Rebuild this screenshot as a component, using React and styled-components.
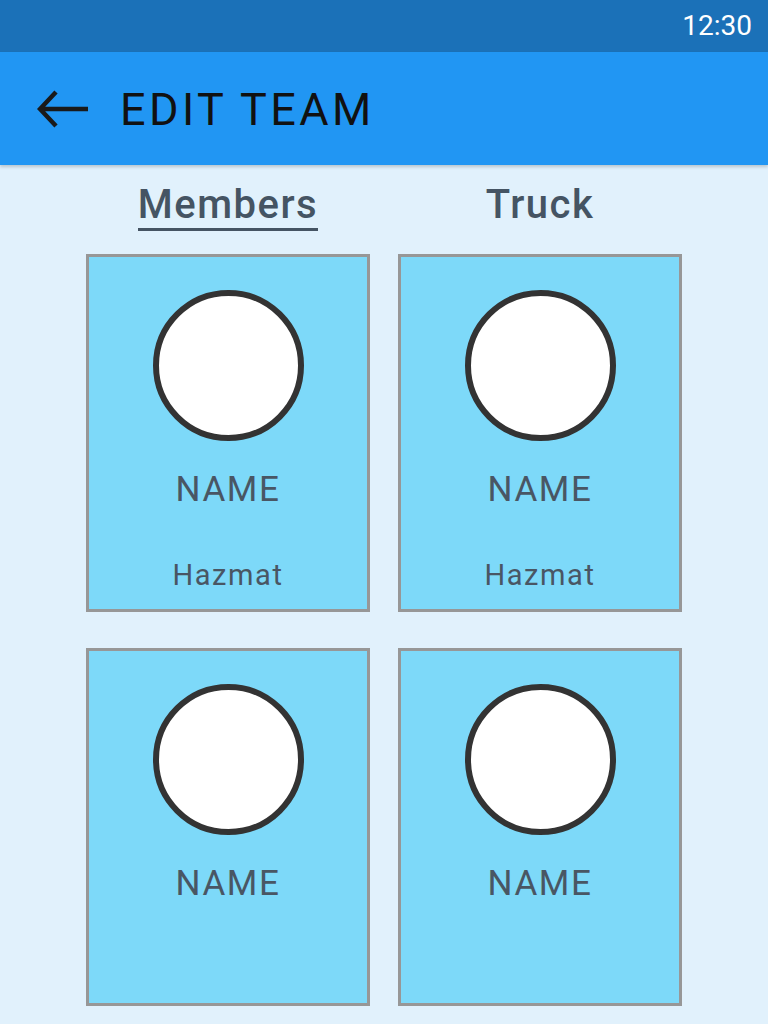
import React from 'react';
import styled, { createGlobalStyle } from 'styled-components';

const GlobalStyle = createGlobalStyle`
  html, body {
    margin: 0;
    padding: 0;
    background: #e1f1fc;
  }
  * {
    box-sizing: border-box;
  }
`;

const Page = styled.div`
  width: 768px;
  height: 1024px;
  overflow: hidden;
  background: #e1f1fc;
  font-family: Roboto, 'Liberation Sans', sans-serif;
`;

const StatusBar = styled.div`
  display: flex;
  justify-content: flex-end;
  align-items: center;
  height: 52px;
  padding-right: 16px;
  background: #1b71b8;
  color: #fff;
  font-size: 28px;
  line-height: 1;
`;

const AppBar = styled.header`
  display: flex;
  align-items: center;
  height: 113px;
  padding-left: 37px;
  gap: 31px;
  background: #2196f3;
  box-shadow: 0 2px 3px rgba(0, 0, 0, 0.18);
  position: relative;
`;

const Title = styled.h1`
  margin: 0;
  padding-top: 2px;
  font-size: 45px;
  font-weight: 400;
  letter-spacing: 3.4px;
  color: #111;
`;

const BackArrow = () => (
  <svg width='52' height='40' viewBox='0 0 52 40'>
    <path
      d='M51 20H4M19 3L3 20l16 17'
      fill='none'
      stroke='#1a1a1a'
      strokeWidth='4.5'
    />
  </svg>
);

const Tabs = styled.nav`
  display: grid;
  grid-template-columns: 284px 284px;
  column-gap: 28px;
  justify-content: center;
  margin-top: 16px;
`;

const TabCell = styled.div`
  display: flex;
  justify-content: center;
`;

const Tab = styled.span`
  display: inline-block;
  font-size: 40px;
  line-height: 47px;
  font-weight: 500;
  letter-spacing: 1.5px;
  color: #455463;
  border-bottom: 3px solid ${({ active }) => (active ? '#455463' : 'transparent')};
`;

const Grid = styled.div`
  display: grid;
  grid-template-columns: 284px 284px;
  column-gap: 28px;
  row-gap: 36px;
  justify-content: center;
  margin-top: 23px;
`;

const Card = styled.div`
  display: flex;
  flex-direction: column;
  align-items: center;
  height: 358px;
  padding-top: 33px;
  background: #7dd9f9;
  border: 3px solid #979797;
`;

const Avatar = styled.div`
  width: 151px;
  height: 151px;
  border-radius: 50%;
  background: #fff;
  border: 6px solid #333;
`;

const Name = styled.div`
  margin-top: 28px;
  font-size: 35px;
  line-height: 41px;
  letter-spacing: 1.6px;
  color: #495664;
`;

const Role = styled.div`
  margin-top: 48px;
  font-size: 29px;
  line-height: 34px;
  letter-spacing: 1.6px;
  color: #495664;
`;

const members = [
  { id: 1, role: 'Hazmat' },
  { id: 2, role: 'Hazmat' },
  { id: 3 },
  { id: 4 },
];

const App = () => (
  <Page>
    <GlobalStyle />
    <StatusBar>12:30</StatusBar>
    <AppBar>
      <BackArrow />
      <Title>EDIT TEAM</Title>
    </AppBar>
    <Tabs>
      <TabCell>
        <Tab active>Members</Tab>
      </TabCell>
      <TabCell>
        <Tab>Truck</Tab>
      </TabCell>
    </Tabs>
    <Grid>
      {members.map((m) => (
        <Card key={m.id}>
          <Avatar />
          <Name>NAME</Name>
          {m.role && <Role>{m.role}</Role>}
        </Card>
      ))}
    </Grid>
  </Page>
);

export default App;
